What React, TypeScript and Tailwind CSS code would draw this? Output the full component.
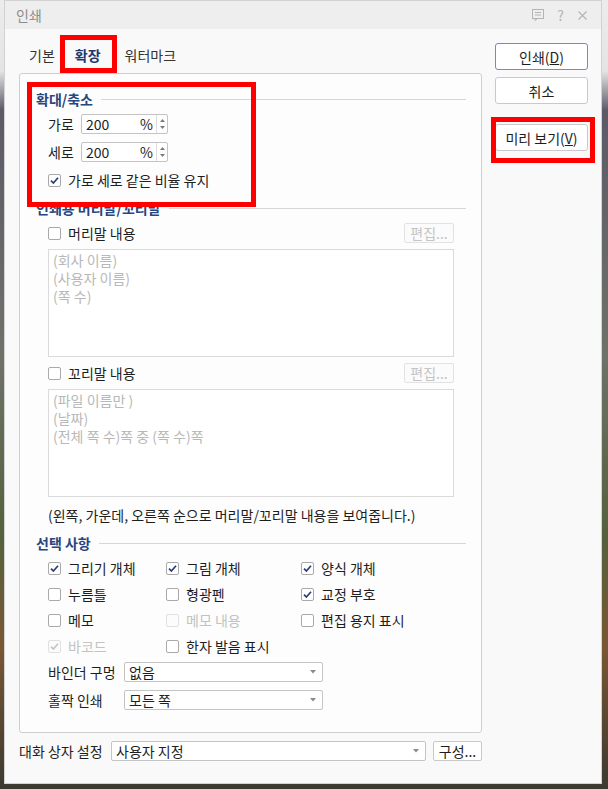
import React from 'react';

const F = "font-['Noto_Sans_CJK_KR','Noto_Sans',sans-serif]";

function Check({ checked = false, disabled = false }: { checked?: boolean; disabled?: boolean }) {
  return (
    <span
      className={`w-[13px] h-[13px] shrink-0 rounded-[2px] border flex items-center justify-center ${
        disabled ? 'border-[#e0e0e0] bg-[#fcfcfc]' : 'border-[#a9a9a9] bg-white'
      }`}
    >
      {checked && (
        <svg width="11" height="11" viewBox="0 0 11 11">
          <path
            d="M2 5.6 L4.4 8 L9 2.8"
            fill="none"
            stroke={disabled ? '#c4c4c4' : '#2a3d78'}
            strokeWidth="1.7"
          />
        </svg>
      )}
    </span>
  );
}

function CheckItem({ label, checked, disabled }: { label: string; checked?: boolean; disabled?: boolean }) {
  return (
    <div className="flex items-center gap-[7px] h-[20px]">
      <Check checked={checked} disabled={disabled} />
      <span className={disabled ? 'text-[#c2c2c2]' : 'text-[#1e1e1e]'}>{label}</span>
    </div>
  );
}

function Header({ text }: { text: string }) {
  return (
    <div className="flex items-center h-[18px]">
      <span className="text-[#28467f] font-semibold">{text}</span>
      <div className="flex-1 h-px bg-[#d6d6d6] ml-[8px]" />
    </div>
  );
}

function Spin({ label, value }: { label: string; value: string }) {
  return (
    <div className="flex items-center h-[20px]">
      <span className="w-[33px]">{label}</span>
      <div className="w-[87px] h-[20px] border border-[#c4c4c4] rounded-[2px] bg-white flex items-center">
        <span className="pl-[4px] flex-1">{value}</span>
        <span className="pr-[3px]">%</span>
        <div className="w-[11px] h-full border-l border-[#dcdcdc] flex flex-col items-center justify-center gap-[4px]">
          <svg width="5" height="3" viewBox="0 0 5 3"><path d="M0 3 L2.5 0 L5 3 Z" fill="#7a7a7a" /></svg>
          <svg width="5" height="3" viewBox="0 0 5 3"><path d="M0 0 L2.5 3 L5 0 Z" fill="#7a7a7a" /></svg>
        </div>
      </div>
    </div>
  );
}

function Select({ value, w }: { value: string; w: string }) {
  return (
    <div className={`${w} h-[20px] border border-[#c4c4c4] rounded-[2px] bg-white flex items-center`}>
      <span className="pl-[4px] flex-1">{value}</span>
      <svg className="mr-[6px]" width="6" height="4" viewBox="0 0 6 4"><path d="M0 0 L3 3.5 L6 0 Z" fill="#8a8a8a" /></svg>
    </div>
  );
}

function Note({ lines }: { lines: string[] }) {
  return (
    <div className="h-[108px] border border-[#dadada] bg-white pl-[4px] pt-[1px] text-[#b8b8b8] flex flex-col">
      {lines.map((l) => (
        <div key={l} className="h-[18px] leading-[18px] overflow-hidden">{l}</div>
      ))}
    </div>
  );
}

function EditRow({ label }: { label: string }) {
  return (
    <div className="flex items-center justify-between h-[20px]">
      <CheckItem label={label} />
      <div className="w-[50px] h-[20px] border border-[#e2e2e2] rounded-[2px] bg-[#fbfbfb] text-[#c4c4c4] flex items-center justify-center">
        편집...
      </div>
    </div>
  );
}

function Btn({ children, primary }: { children: React.ReactNode; primary?: boolean }) {
  return (
    <div
      className={`w-[93px] h-[27px] rounded-[3px] bg-white flex items-center justify-center ${
        primary ? 'border-[1.5px] border-[#6c8ccc]' : 'border border-[#c9c9c9]'
      }`}
    >
      {children}
    </div>
  );
}

export default function App() {
  return (
    <div
      className={`${F} relative w-[608px] h-[789px] overflow-hidden text-[14px] leading-[18px] text-[#1e1e1e] bg-[linear-gradient(to_bottom,#ececec_0%,#e4e4e4_9%,#5c5a68_14%,#6e7268_45%,#55613c_68%,#7a5634_82%,#3b3a30_100%)]`}
    >
      <div className="ml-[4px] w-[598px] h-[784px] border border-[#d2d2d2] bg-[#f9f9f9] flex flex-col">
        {/* title bar */}
        <div className="h-[28px] bg-[#eeeeee] flex items-center pl-[11px] pr-[14px]">
          <span className="text-[#8c8c8c] flex-1">인쇄</span>
          <svg width="12" height="12" viewBox="0 0 12 12" className="mr-[13px]">
            <rect x="0.5" y="0.5" width="11" height="9" fill="none" stroke="#b4b4b4" />
            <path d="M3 3.5 H9 M3 6 H9 M3 10 L3 11.5 L5 10" fill="none" stroke="#b4b4b4" />
          </svg>
          <span className="text-[#b4b4b4] mr-[14px] text-[14px]">?</span>
          <svg width="9" height="9" viewBox="0 0 9 9">
            <path d="M0.5 0.5 L8.5 8.5 M8.5 0.5 L0.5 8.5" stroke="#b4b4b4" strokeWidth="1.1" />
          </svg>
        </div>

        <div className="flex flex-1">
          {/* left column */}
          <div className="pl-[14px] w-[477px] flex flex-col">
            <div className="h-[44px] flex items-end gap-[1px]">
              <div className="h-[27px] pl-[10px] pr-[9px] text-[#333]">기본</div>
              <div className="h-[27px] px-[10px] text-[#22386e] font-semibold border-b-2 border-[#4f4a9c]">확장</div>
              <div className="h-[27px] pl-[13px] pr-[10px] text-[#333]">워터마크</div>
            </div>

            <div className="h-[660px] border border-[#cfcfcf] rounded-[3px] bg-[#fdfdfd] pt-[16px] pl-[16px] pr-[15px] flex flex-col">
              <Header text="확대/축소" />
              <div className="mx-[12px] flex flex-col">
                <div className="mt-[6px]"><Spin label="가로" value="200" /></div>
                <div className="mt-[8px]"><Spin label="세로" value="200" /></div>
                <div className="mt-[8px]"><CheckItem label="가로 세로 같은 비율 유지" checked /></div>
              </div>

              <div className="mt-[9px]"><Header text="인쇄용 머리말/꼬리말" /></div>
              <div className="mx-[12px] flex flex-col">
                <div className="mt-[6px]"><EditRow label="머리말 내용" /></div>
                <div className="mt-[6px]"><Note lines={['(회사 이름)', '(사용자 이름)', '(쪽 수)']} /></div>
                <div className="mt-[6px]"><EditRow label="꼬리말 내용" /></div>
                <div className="mt-[6px]"><Note lines={['(파일 이름만 )', '(날짜)', '(전체 쪽 수)쪽 중 (쪽 수)쪽']} /></div>
                <div className="mt-[9px] h-[18px]">(왼쪽, 가운데, 오른쪽 순으로 머리말/꼬리말 내용을 보여줍니다.)</div>
              </div>

              <div className="mt-[10px]"><Header text="선택 사항" /></div>
              <div className="mx-[12px] flex flex-col">
                <div className="mt-[6px] grid grid-cols-[118px_135px_1fr] gap-y-[6px]">
                  <CheckItem label="그리기 개체" checked />
                  <CheckItem label="그림 개체" checked />
                  <CheckItem label="양식 개체" checked />
                  <CheckItem label="누름틀" />
                  <CheckItem label="형광펜" />
                  <CheckItem label="교정 부호" checked />
                  <CheckItem label="메모" />
                  <CheckItem label="메모 내용" disabled />
                  <CheckItem label="편집 용지 표시" />
                  <CheckItem label="바코드" checked disabled />
                  <CheckItem label="한자 발음 표시" />
                </div>
                <div className="mt-[6px] flex items-center">
                  <span className="w-[76px]">바인더 구멍</span>
                  <Select value="없음" w="w-[199px]" />
                </div>
                <div className="mt-[8px] flex items-center">
                  <span className="w-[76px]">홀짝 인쇄</span>
                  <Select value="모든 쪽" w="w-[199px]" />
                </div>
              </div>
            </div>

            <div className="mt-[8px] flex items-center">
              <span className="w-[92px]">대화 상자 설정</span>
              <Select value="사용자 지정" w="w-[315px]" />
              <div className="ml-[7px] w-[49px] h-[20px] border border-[#c9c9c9] rounded-[2px] bg-white flex items-center justify-center">
                구성...
              </div>
            </div>
          </div>

          {/* right column */}
          <div className="ml-[13px] pt-[14px] flex flex-col">
            <Btn primary>
              인쇄(<span className="underline">D</span>)
            </Btn>
            <div className="mt-[7px]">
              <Btn>취소</Btn>
            </div>
            <div className="mt-[20px]">
              <Btn>
                미리 보기(<span className="underline">V</span>)
              </Btn>
            </div>
          </div>
        </div>
      </div>

      {/* red annotation boxes */}
      <div className="absolute left-[60px] top-[35px] w-[57px] h-[38px] border-[5px] border-[#ff0000]" />
      <div className="absolute left-[27px] top-[82px] w-[229px] h-[125px] border-[5px] border-[#ff0000]" />
      <div className="absolute left-[491px] top-[117px] w-[104px] h-[46px] border-[5px] border-[#ff0000]" />
    </div>
  );
}
